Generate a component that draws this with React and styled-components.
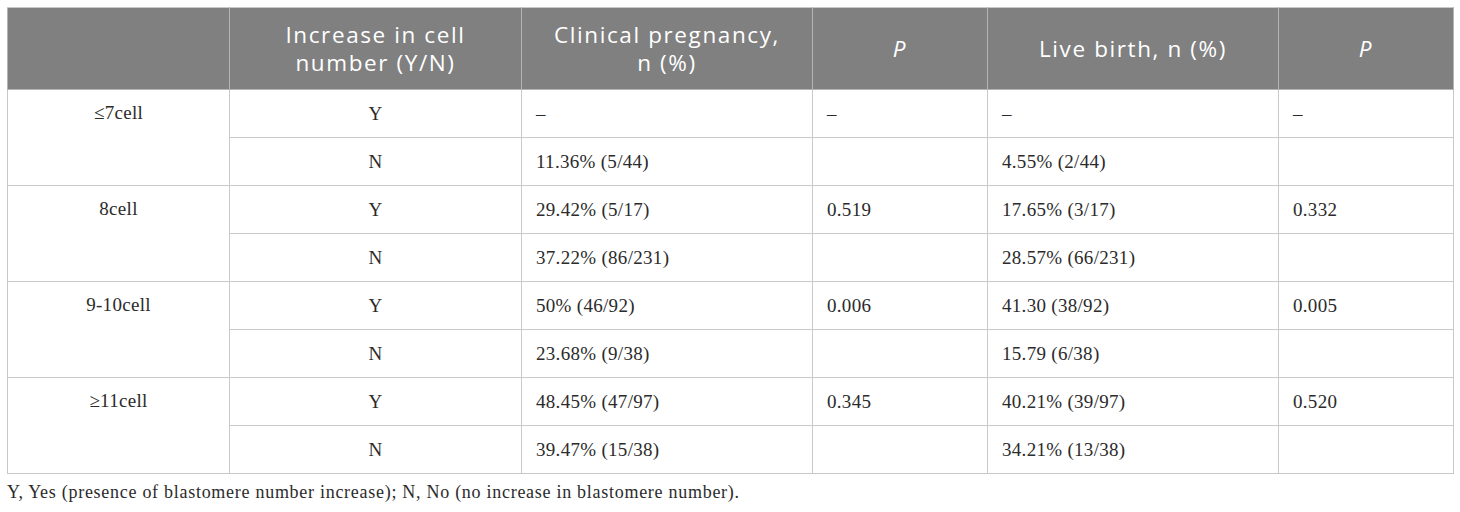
import React from 'react';
import styled, { createGlobalStyle } from 'styled-components';

const GlobalStyle = createGlobalStyle`
  html, body {
    margin: 0;
    padding: 0;
    background: #ffffff;
  }
`;

const Page = styled.div`
  padding: 7px 7px 0 7px;
  width: 1446px;
`;

const Table = styled.table`
  width: 1446px;
  border-collapse: collapse;
  table-layout: fixed;
  border: 1px solid #c9c9c9;
`;

const Head = styled.th`
  background: #7f807f;
  color: #ffffff;
  font-family: 'Open Sans', 'Noto Sans', sans-serif;
  font-weight: 400;
  font-size: 22.5px;
  letter-spacing: 1.6px;
  line-height: 28px;
  height: 81px;
  padding: 0 8px;
  text-align: center;
  vertical-align: middle;
  border: 1px solid #b4b4b4;
  border-top-color: #c9c9c9;
  font-style: ${({ italic }) => (italic ? 'italic' : 'normal')};
`;

const Cell = styled.td`
  font-family: 'Liberation Serif', 'Times New Roman', serif;
  font-size: 19px;
  letter-spacing: 0.3px;
  color: #2b2b2b;
  height: 47px;
  padding: 0 14px;
  border: 1px solid #c9c9c9;
  text-align: ${({ center }) => (center ? 'center' : 'left')};
  vertical-align: middle;
`;

const GroupCell = styled(Cell)`
  text-align: center;
  vertical-align: top;
  padding-top: 12px;
`;

const Note = styled.p`
  margin: 8px 0 0 0;
  font-family: 'Liberation Serif', 'Times New Roman', serif;
  font-size: 18px;
  letter-spacing: 0.72px;
  color: #2b2b2b;
`;

const groups = [
  {
    label: '≤7cell',
    rows: [
      { yn: 'Y', cp: '–', p1: '–', lb: '–', p2: '–' },
      { yn: 'N', cp: '11.36% (5/44)', p1: '', lb: '4.55% (2/44)', p2: '' },
    ],
  },
  {
    label: '8cell',
    rows: [
      { yn: 'Y', cp: '29.42% (5/17)', p1: '0.519', lb: '17.65% (3/17)', p2: '0.332' },
      { yn: 'N', cp: '37.22% (86/231)', p1: '', lb: '28.57% (66/231)', p2: '' },
    ],
  },
  {
    label: '9-10cell',
    rows: [
      { yn: 'Y', cp: '50% (46/92)', p1: '0.006', lb: '41.30 (38/92)', p2: '0.005' },
      { yn: 'N', cp: '23.68% (9/38)', p1: '', lb: '15.79 (6/38)', p2: '' },
    ],
  },
  {
    label: '≥11cell',
    rows: [
      { yn: 'Y', cp: '48.45% (47/97)', p1: '0.345', lb: '40.21% (39/97)', p2: '0.520' },
      { yn: 'N', cp: '39.47% (15/38)', p1: '', lb: '34.21% (13/38)', p2: '' },
    ],
  },
];

export default function App() {
  return (
    <Page>
      <GlobalStyle />
      <Table>
        <colgroup>
          <col style={{ width: 222 }} />
          <col style={{ width: 292 }} />
          <col style={{ width: 291 }} />
          <col style={{ width: 175 }} />
          <col style={{ width: 291 }} />
          <col style={{ width: 175 }} />
        </colgroup>
        <thead>
          <tr>
            <Head />
            <Head>
              Increase in cell
              <br />
              number (Y/N)
            </Head>
            <Head>
              Clinical pregnancy,
              <br />
              n (%)
            </Head>
            <Head italic>P</Head>
            <Head>Live birth, n (%)</Head>
            <Head italic>P</Head>
          </tr>
        </thead>
        <tbody>
          {groups.map(g =>
            g.rows.map((r, i) => (
              <tr key={g.label + r.yn}>
                {i === 0 && <GroupCell rowSpan={2}>{g.label}</GroupCell>}
                <Cell center>{r.yn}</Cell>
                <Cell>{r.cp}</Cell>
                <Cell>{r.p1}</Cell>
                <Cell>{r.lb}</Cell>
                <Cell>{r.p2}</Cell>
              </tr>
            )),
          )}
        </tbody>
      </Table>
      <Note>
        Y, Yes (presence of blastomere number increase); N, No (no increase in
        blastomere number).
      </Note>
    </Page>
  );
}
